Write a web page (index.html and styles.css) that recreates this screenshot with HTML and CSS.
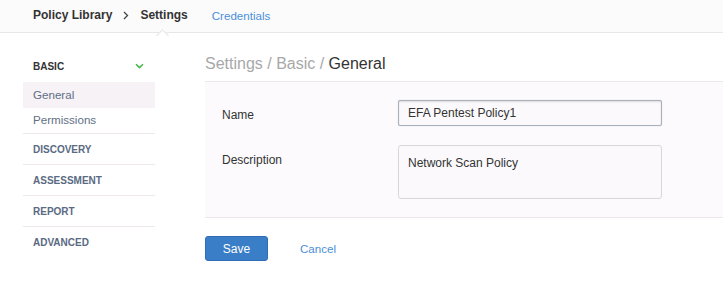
FILE: index.html
```html
<!DOCTYPE html>
<html>
<head>
<meta charset="utf-8">
<link rel="stylesheet" href="styles.css">
</head>
<body>
<header class="topbar">
  <nav class="crumbs">
    <span class="crumb strong">Policy Library</span>
    <svg class="sep" width="6" height="9" viewBox="0 0 6 9"><path d="M1 1 L4.5 4.5 L1 8" fill="none" stroke="#444" stroke-width="1.3"/></svg>
    <span class="crumb strong current">Settings</span>
    <span class="crumb link">Credentials</span>
  </nav>
</header>
<div class="layout">
  <aside class="sidebar">
    <div class="group-head">
      <span>BASIC</span>
      <svg class="chev" width="9" height="6" viewBox="0 0 9 6"><path d="M1 1.2 L4.5 4.6 L8 1.2" fill="none" stroke="#4cb84c" stroke-width="1.6"/></svg>
    </div>
    <div class="sub active">General</div>
    <div class="sub bordered">Permissions</div>
    <div class="section">DISCOVERY</div>
    <div class="section">ASSESSMENT</div>
    <div class="section">REPORT</div>
    <div class="section last">ADVANCED</div>
  </aside>
  <main class="content">
    <h1 class="title"><span class="muted">Settings / Basic / </span>General</h1>
    <div class="form">
      <div class="row">
        <label class="label">Name</label>
        <div class="field input">EFA Pentest Policy1</div>
      </div>
      <div class="row">
        <label class="label desc">Description</label>
        <div class="field textarea">Network Scan Policy</div>
      </div>
    </div>
    <div class="actions">
      <button class="btn">Save</button>
      <span class="cancel">Cancel</span>
    </div>
  </main>
</div>
</body>
</html>
```
FILE: styles.css
```css
* { box-sizing: border-box; }
body {
  margin: 0;
  font-family: "Liberation Sans", Arial, sans-serif;
  background: #ffffff;
  color: #333;
  width: 723px;
  height: 297px;
  overflow: hidden;
}
.topbar {
  height: 33px;
  background: #fcfbfc;
  border-bottom: 1px solid #e9e6e9;
  position: relative;
}
.crumbs {
  display: flex;
  align-items: center;
  height: 30px;
  padding-left: 33px;
  font-size: 12px;
}
.crumb.strong { font-weight: bold; color: #333; }
.sep { margin: 1px 11px 0 11px; }
.crumb.current { position: relative; }
.crumb.current::after {
  content: "";
  position: absolute;
  left: 18px;
  top: 23px;
  width: 8px;
  height: 8px;
  background: #fff;
  border-left: 1px solid #e6e3e6;
  border-top: 1px solid #e6e3e6;
  transform: rotate(45deg);
}
.crumb.link { color: #4a8fd8; margin-left: 24px; font-size: 11.6px; }

.layout {
  display: flex;
}
.sidebar {
  width: 132px;
  margin-left: 23px;
  padding-top: 21px;
}
.group-head {
  display: flex;
  justify-content: space-between;
  align-items: center;
  padding: 0 10px 0 10px;
  height: 24px;
  margin-bottom: 4px;
  font-size: 10px;
  font-weight: bold;
  color: #333;
}
.chev { margin-right: 1px; }
.sub {
  height: 26px;
  line-height: 26px;
  padding-left: 10px;
  font-size: 11.6px;
  color: #5f6f85;
}
.sub.active { background: #f6f2f6; }
.sub.bordered { border-bottom: 1px solid #eee8ee; line-height: 24px; }
.section {
  height: 31px;
  line-height: 31px;
  padding-left: 10px;
  font-size: 10px;
  font-weight: bold;
  color: #5a6a82;
  border-bottom: 1px solid #eee8ee;
}
.section.last { border-bottom: none; }

.content {
  flex: 1;
  margin-left: 50px;
  padding-top: 18px;
}
.title {
  margin: 0;
  font-weight: normal;
  font-size: 16px;
  color: #333;
  height: 30px;
  line-height: 26px;
}
.title .muted { color: #a8a8a8; }
.form {
  background: #fcfafc;
  border-top: 1px solid #ece8ec;
  border-bottom: 1px solid #ece8ec;
  padding: 18px 0 18px 17px;
  display: flex;
  flex-direction: column;
  gap: 19px;
}
.row {
  display: flex;
  align-items: flex-start;
}
.label {
  width: 176px;
  font-size: 12px;
  color: #333;
  padding-top: 8px;
}
.label.desc { padding-top: 8px; }
.field {
  width: 264px;
  background: #fbf9fb;
  font-size: 12px;
  color: #333;
  padding-left: 9px;
}
.input {
  height: 26px;
  line-height: 24px;
  border: 1px solid #a9b1bc;
  border-radius: 2px;
  box-shadow: inset 0 1px 2px rgba(0,0,0,0.12), 0 0 1px rgba(120,140,170,0.5);
}
.textarea {
  height: 54px;
  border: 1px solid #d8d6d8;
  border-radius: 3px;
  padding-top: 10px;
  line-height: 15px;
}
.actions {
  display: flex;
  align-items: center;
  padding-top: 18px;
}
.btn {
  width: 63px;
  height: 25px;
  background: #3b7ec8;
  border: 1px solid #2f6db5;
  border-radius: 3px;
  color: #fff;
  font-family: "Liberation Sans", Arial, sans-serif;
  font-size: 12px;
  padding: 0;
}
.cancel {
  margin-left: 32px;
  font-size: 11.6px;
  color: #4a8fd8;
}
```
